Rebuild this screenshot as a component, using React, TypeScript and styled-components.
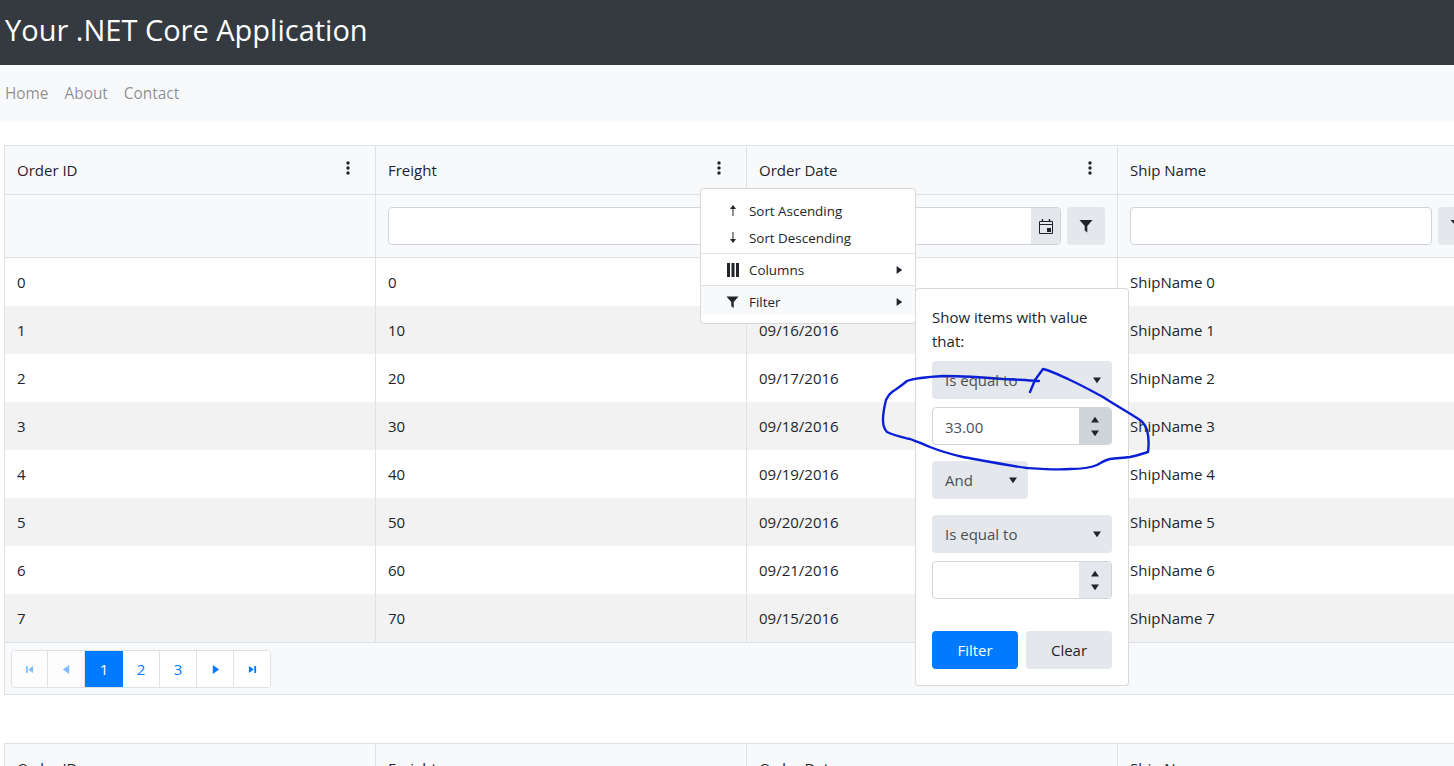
import React from "react";
import styled, { createGlobalStyle } from "styled-components";

const Global = createGlobalStyle`
  html, body { margin: 0; padding: 0; background: #fff; height: 766px; overflow: hidden; }
  body { font-family: "Open Sans", "Noto Sans", sans-serif; font-size: 15px; line-height: 24px; color: #212529; }
  * { box-sizing: border-box; }
`;

const Page = styled.div`position: relative; width: 1454px; height: 766px; overflow: hidden;`;
const TopBar = styled.header`height: 65px; background: #343a40; display: flex; align-items: center; padding: 0 0 7px 5px;`;
const Title = styled.h1`margin: 0; font-size: 29px; font-weight: 400; line-height: 1; color: #fff;`;
const NavBar = styled.nav`height: 56px; background: #f8f9fa; display: flex; align-items: center; gap: 16px; padding: 2px 0 0 5px;`;
const NavLink = styled.a`color: rgba(0,0,0,.45); font-size: 15.4px;`;
const Content = styled.main`padding: 24px 0 0 4px; display: flex; flex-direction: column; gap: 48px;`;

const GridBox = styled.section`width: 1600px; border: 1px solid #dee2e6;`;
const Row = styled.div<{ $h: number; $bg?: string; $line?: boolean }>`
  display: grid; grid-template-columns: repeat(4, 371px);
  height: ${p => p.$h}px; background: ${p => p.$bg || "#fff"};
  border-bottom: ${p => (p.$line ? "1px solid #dee2e6" : "none")};
`;
const Cell = styled.div`
  display: flex; align-items: center; gap: 6px; padding: 0 12px; border-right: 1px solid #dee2e6; min-width: 0;
`;
const HeadLabel = styled.span`flex: 1;`;
const Kebab = styled.svg`width: 4px; height: 14px; margin: 0 13px 4px 0; fill: #212529; flex: none;`;

const InputWrap = styled.div`flex: 1; height: 38px; display: flex; border: 1px solid #ced4da; border-radius: 4px; background: #fff; overflow: hidden;`;
const InputField = styled.div`flex: 1; padding: 7px 12px 5px; font-size: 15px; color: #495057; line-height: 24px;`;
const Addon = styled.span`width: 29px; background: #e4e7eb; display: flex; align-items: center; justify-content: center;`;
const IconButton = styled.span`width: 38px; height: 38px; flex: none; border-radius: 4px; background: #e4e7eb; display: flex; align-items: center; justify-content: center;`;

const Pager = styled.div`height: 52px; background: #f8f9fa; padding: 7px 6px 0; border-top: 1px solid #dee2e6;`;
const PagerList = styled.div`display: inline-flex; height: 38px; background: #fff; border: 1px solid #dee2e6; border-radius: 4px; overflow: hidden;`;
const PageBtn = styled.span<{ $active?: boolean; $dim?: boolean }>`
  width: ${p => (p.$active ? 38 : 37)}px; display: flex; align-items: center; justify-content: center; font-size: 15px;
  color: ${p => (p.$active ? "#fff" : p.$dim ? "#7fbdff" : "#007bff")}; background: ${p => (p.$active ? "#007bff" : p.$dim ? "#fdfdfe" : "#fff")};
  border-right: ${p => (p.$active ? "0" : "1px solid #dee2e6")};
  &:first-child { width: 36px; }
  &:last-child { width: 36px; border-right: 0; }
`;

const Menu = styled.div`
  position: absolute; left: 700px; top: 188px; width: 216px; height: 136px; padding: 8px 0;
  background: #fff; border: 1px solid rgba(0,0,0,.15); border-radius: 4px; font-size: 13.4px; z-index: 2;
`;
const MenuItem = styled.div<{ $h: number; $hover?: boolean; $sep?: boolean; $pt?: number; $pb?: number }>`
  height: ${p => p.$h}px; display: flex; align-items: center; padding: ${p => p.$pt || 0}px 12px ${p => p.$pb || 0}px 25px;
  background: ${p => (p.$hover ? "#f8f9fa" : "transparent")};
  border-top: ${p => (p.$sep ? "1px solid #dee2e6" : "none")};
`;
const MenuIcon = styled.span`width: 13px; margin-right: 10px; display: flex; justify-content: center;`;
const MenuText = styled.span`flex: 1;`;

const FilterPop = styled.div`
  position: absolute; left: 915px; top: 288px; width: 214px; height: 398px; padding: 16px;
  background: #fff; border: 1px solid rgba(0,0,0,.15); border-radius: 4px; font-size: 15px; z-index: 3;
  display: flex; flex-direction: column;
`;
const Prompt = styled.p`margin: 0 0 8px; line-height: 24px;`;
const Select = styled.div<{ $w?: number; $mb: number }>`
  width: ${p => p.$w || 180}px; height: 38px; flex: none; margin-bottom: ${p => p.$mb}px; border-radius: 4px; background: #e4e7eb;
  display: flex; align-items: center; padding: 0 11px 0 13px; color: #495057;
`;
const SelectText = styled.span`flex: 1;`;
const Numeric = styled.div<{ $mb: number }>`
  width: 180px; height: 38px; flex: none; margin-bottom: ${p => p.$mb}px; display: flex;
  border: 1px solid #ced4da; border-radius: 4px; overflow: hidden;
`;
const Spinner = styled.span<{ $on?: boolean }>`
  width: 32px; background: ${p => (p.$on ? "#ced4da" : "#e4e7eb")}; display: flex; flex-direction: column;
  align-items: center; justify-content: center; gap: 5px;
`;
const Actions = styled.div`display: flex; gap: 8px;`;
const Btn = styled.span<{ $primary?: boolean }>`
  width: 86px; height: 38px; border-radius: 4px; display: flex; align-items: center; justify-content: center;
  background: ${p => (p.$primary ? "#007bff" : "#e4e7eb")}; color: ${p => (p.$primary ? "#fff" : "#212529")};
`;
const Scribble = styled.svg`position: absolute; left: 0; top: 0; z-index: 4; pointer-events: none;`;

const Tri = ({ dir = "down", size = 8 }: { dir?: "down" | "up" | "right" | "left"; size?: number }) => {
  const pts = { down: "0,2 10,2 5,9", up: "0,8 10,8 5,1", right: "2,0 9,5 2,10", left: "8,0 1,5 8,10" }[dir];
  return <svg width={size} height={size} viewBox="0 0 10 10" fill={dir === "left" || dir === "right" ? "currentColor" : "#212529"}><polygon points={pts} /></svg>;
};
const Funnel = () => (
  <svg width="14" height="14" viewBox="0 0 14 14" fill="#212529"><path d="M.5 1h13L8.3 7v6.5L5.7 11.5V7z" /></svg>
);
const Calendar = () => (
  <svg width="14" height="15" viewBox="0 0 14 15" fill="none" stroke="#212529"><path d="M.5 2.5h13v12H.5zM.5 5.5h13" /><path d="M3.5 0v3M10.5 0v3" strokeWidth="1.4" /><rect x="8" y="9" width="4" height="4" fill="#212529" stroke="none" /></svg>
);
const ArrowUp = () => (
  <svg width="8" height="11" viewBox="0 0 8 11" fill="#212529"><path d="M3.5 11V4H1l3-4 3 4H4.5v7z" /></svg>
);
const ArrowDown = () => (
  <svg width="8" height="11" viewBox="0 0 8 11" fill="#212529"><path d="M3.5 0v7H1l3 4 3-4H4.5V0z" /></svg>
);
const ColumnsIcon = () => (
  <svg width="12" height="14" viewBox="0 0 12 14" fill="#212529"><path d="M0 0h3v14H0zM4.5 0h3v14h-3zM9 0h3v14H9z" /></svg>
);
const Dots = () => (
  <Kebab viewBox="0 0 4 14"><circle cx="2" cy="2" r="1.7" /><circle cx="2" cy="7" r="1.7" /><circle cx="2" cy="12" r="1.7" /></Kebab>
);
const EdgeIcon = ({ dir }: { dir: "first" | "last" }) => (
  <svg width="9" height="9" viewBox="0 0 10 10" fill="currentColor">
    {dir === "first" ? <path d="M1 1h2v8H1zM9 1v8L3.5 5z" /> : <path d="M7 1h2v8H7zM1 1v8l5.5-4z" />}
  </svg>
);

const dates = ["09/15/2016", "09/16/2016", "09/17/2016", "09/18/2016", "09/19/2016", "09/20/2016", "09/21/2016", "09/15/2016"];

const Header = ({ menus }: { menus?: boolean }) => (
  <Row $h={49} $bg="#f8f9fa" $line>
    {["Order ID", "Freight", "Order Date", "Ship Name"].map((t, i) => (
      <Cell key={t}><HeadLabel>{t}</HeadLabel>{menus && i < 3 && <Dots />}</Cell>
    ))}
  </Row>
);

const App = () => (
  <Page>
    <Global />
    <TopBar><Title>Your .NET Core Application</Title></TopBar>
    <NavBar>
      <NavLink>Home</NavLink><NavLink>About</NavLink><NavLink>Contact</NavLink>
    </NavBar>
    <Content>
      <GridBox>
        <Header menus />
        <Row $h={63} $bg="#f8f9fa" $line>
          <Cell />
          <Cell><InputWrap><InputField /></InputWrap></Cell>
          <Cell><InputWrap><InputField /><Addon><Calendar /></Addon></InputWrap><IconButton><Funnel /></IconButton></Cell>
          <Cell><InputWrap><InputField /></InputWrap><IconButton><Funnel /></IconButton></Cell>
        </Row>
        {dates.map((d, i) => (
          <Row key={i} $h={48} $bg={i % 2 ? "#f2f2f2" : "#fff"}>
            <Cell>{i}</Cell>
            <Cell>{i * 10}</Cell>
            <Cell>{d}</Cell>
            <Cell>ShipName {i}</Cell>
          </Row>
        ))}
        <Pager>
          <PagerList>
            <PageBtn $dim><EdgeIcon dir="first" /></PageBtn>
            <PageBtn $dim><Tri dir="left" size={9} /></PageBtn>
            <PageBtn $active>1</PageBtn>
            <PageBtn>2</PageBtn>
            <PageBtn>3</PageBtn>
            <PageBtn><Tri dir="right" size={9} /></PageBtn>
            <PageBtn><EdgeIcon dir="last" /></PageBtn>
          </PagerList>
        </Pager>
      </GridBox>
      <GridBox><Header /></GridBox>
    </Content>

    <Menu>
      <MenuItem $h={27}><MenuIcon><ArrowUp /></MenuIcon><MenuText>Sort Ascending</MenuText></MenuItem>
      <MenuItem $h={29} $pb={2}><MenuIcon><ArrowDown /></MenuIcon><MenuText>Sort Descending</MenuText></MenuItem>
      <MenuItem $h={32} $sep><MenuIcon><ColumnsIcon /></MenuIcon><MenuText>Columns</MenuText><Tri dir="right" /></MenuItem>
      <MenuItem $h={30} $sep $hover $pt={2}><MenuIcon><Funnel /></MenuIcon><MenuText>Filter</MenuText><Tri dir="right" /></MenuItem>
    </Menu>

    <FilterPop>
      <Prompt>Show items with value that:</Prompt>
      <Select $mb={8}><SelectText>Is equal to</SelectText><Tri /></Select>
      <Numeric $mb={16}><InputField>33.00</InputField><Spinner $on><Tri dir="up" /><Tri dir="down" /></Spinner></Numeric>
      <Select $w={96} $mb={16}><SelectText>And</SelectText><Tri /></Select>
      <Select $mb={8}><SelectText>Is equal to</SelectText><Tri /></Select>
      <Numeric $mb={32}><InputField /><Spinner><Tri dir="up" /><Tri dir="down" /></Spinner></Numeric>
      <Actions><Btn $primary>Filter</Btn><Btn>Clear</Btn></Actions>
    </FilterPop>

    <Scribble width="1454" height="766" viewBox="0 0 1454 766" fill="none">
      <path
        d="M1039 381C1020 380 1010 379 1003 379C980 377 960 376 943 376C925 377 915 378 907 381C900 387 896 389 892 392C888 395 887 398 886 400C884 408 883 414 883 420C883 426 884 429 887 432C895 436 902 437 910 439C918 442 924 444 930 447C940 451 950 454 963 457C985 461 1005 465 1027 468C1042 469 1056 470 1070 469C1082 469 1090 468 1097 465C1102 462 1105 460 1110 459C1117 458 1123 458 1130 457C1136 456 1142 454 1148 452C1149 444 1149 437 1147 430C1145 425 1143 422 1140 420C1128 412 1115 405 1103 397C1092 391 1081 385 1070 380C1061 376 1052 371 1043 369L1035 380L1030 392"
        stroke="#0a1fd6" strokeWidth="2.4" strokeLinecap="round" strokeLinejoin="round"
      />
    </Scribble>
  </Page>
);

export default App;
